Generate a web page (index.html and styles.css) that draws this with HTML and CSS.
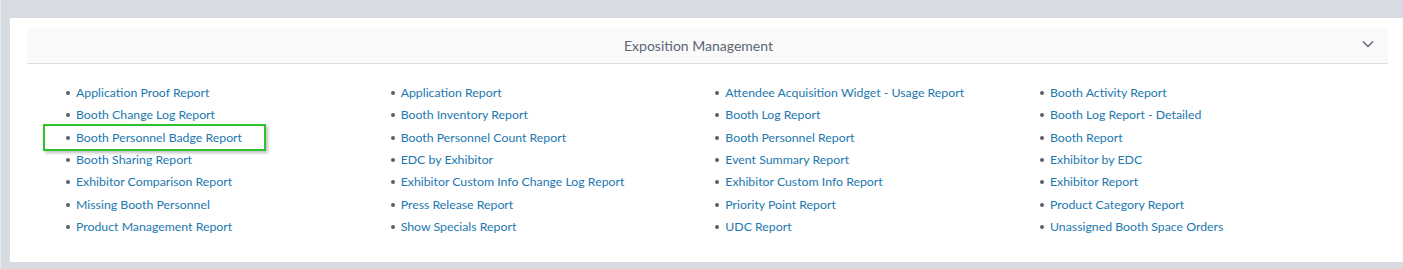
FILE: index.html
```html
<!DOCTYPE html>
<html lang="en">
<head>
    <meta charset="UTF-8">
    <meta name="viewport" content="width=device-width, initial-scale=1.0">
    <title>Reports</title>
    <link rel="stylesheet" href="styles.css">
</head>
<body>
    <div class="page">
        <div class="panel">
            <div class="panel-head">
                <span class="panel-title">Exposition Management</span>
                <svg class="chevron" width="12" height="8" viewBox="0 0 12 8">
                    <polyline points="1,1.5 6,6.5 11,1.5" fill="none" stroke="#5a6470" stroke-width="1.4"/>
                </svg>
            </div>

            <div class="reports">
                <ul class="col">
                    <li><a href="#">Application Proof Report</a></li>
                    <li><a href="#">Booth Change Log Report</a></li>
                    <li class="picked"><a href="#">Booth Personnel Badge Report</a></li>
                    <li><a href="#">Booth Sharing Report</a></li>
                    <li><a href="#">Exhibitor Comparison Report</a></li>
                    <li><a href="#">Missing Booth Personnel</a></li>
                    <li><a href="#">Product Management Report</a></li>
                </ul>
                <ul class="col">
                    <li><a href="#">Application Report</a></li>
                    <li><a href="#">Booth Inventory Report</a></li>
                    <li><a href="#">Booth Personnel Count Report</a></li>
                    <li><a href="#">EDC by Exhibitor</a></li>
                    <li><a href="#">Exhibitor Custom Info Change Log Report</a></li>
                    <li><a href="#">Press Release Report</a></li>
                    <li><a href="#">Show Specials Report</a></li>
                </ul>
                <ul class="col">
                    <li><a href="#">Attendee Acquisition Widget - Usage Report</a></li>
                    <li><a href="#">Booth Log Report</a></li>
                    <li><a href="#">Booth Personnel Report</a></li>
                    <li><a href="#">Event Summary Report</a></li>
                    <li><a href="#">Exhibitor Custom Info Report</a></li>
                    <li><a href="#">Priority Point Report</a></li>
                    <li><a href="#">UDC Report</a></li>
                </ul>
                <ul class="col">
                    <li><a href="#">Booth Activity Report</a></li>
                    <li><a href="#">Booth Log Report - Detailed</a></li>
                    <li><a href="#">Booth Report</a></li>
                    <li><a href="#">Exhibitor by EDC</a></li>
                    <li><a href="#">Exhibitor Report</a></li>
                    <li><a href="#">Product Category Report</a></li>
                    <li><a href="#">Unassigned Booth Space Orders</a></li>
                </ul>
            </div>
        </div>
    </div>
</body>
</html>
```

FILE: styles.css
```css
* {
    box-sizing: border-box;
}

html, body {
    margin: 0;
    padding: 0;
    height: 100%;
    background-color: #d7dce2;
    font-family: Lato, "Open Sans", sans-serif;
}

.page {
    padding: 18px 0 7px 9px;
    border-left: 1px solid #e6e9ee;
}

.panel {
    background-color: #ffffff;
    padding: 10px 15px 0 17px;
    height: 244px;
}

.panel-head {
    display: flex;
    align-items: center;
    justify-content: center;
    height: 36px;
    padding-right: 18px;
    background-color: #fafafa;
    border-bottom: 1px solid #dedede;
    position: relative;
}

.panel-title {
    font-size: 14px;
    color: #5b6672;
}

.chevron {
    position: absolute;
    right: 14px;
    top: 12px;
}

.reports {
    display: grid;
    grid-template-columns: repeat(4, 324.67px);
    padding: 18px 0 0 9px;
}

.col {
    margin: 0;
    padding-left: 40px;
    list-style: none;
}

.col li {
    font-size: 12.3px;
    line-height: 22.33px;
    position: relative;
    white-space: nowrap;
}

.col li::before {
    content: "";
    position: absolute;
    left: -10px;
    top: 9px;
    width: 4px;
    height: 4px;
    border-radius: 50%;
    background-color: #5c5f66;
}

.col a {
    color: #1b78b0;
    text-decoration: none;
}

.picked::after {
    content: "";
    position: absolute;
    left: -33px;
    top: -3px;
    width: 219px;
    height: 23px;
    border: 2px solid #2fc22f;
    box-shadow: 2px 2px 3px rgba(0, 0, 0, 0.25);
}
```
